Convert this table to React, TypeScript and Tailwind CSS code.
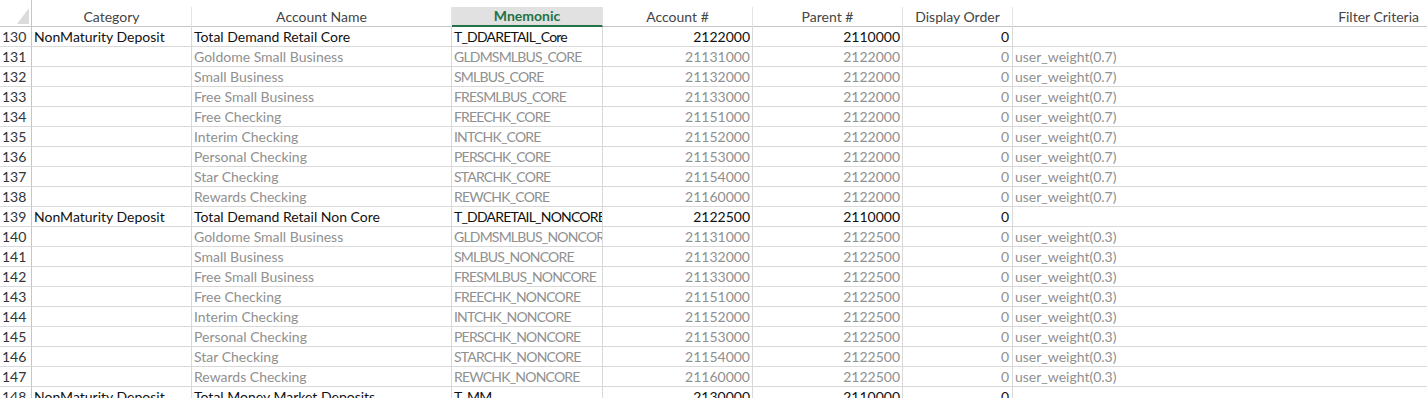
import React from "react";

type Row = {
  n: number;
  cat: string;
  name: string;
  mn: string;
  acct: string;
  parent: string;
  order: string;
  filter: string;
  total: boolean;
};

const subs = [
  ["Goldome Small Business", "GLDMSMLBUS", "21131000"],
  ["Small Business", "SMLBUS", "21132000"],
  ["Free Small Business", "FRESMLBUS", "21133000"],
  ["Free Checking", "FREECHK", "21151000"],
  ["Interim Checking", "INTCHK", "21152000"],
  ["Personal Checking", "PERSCHK", "21153000"],
  ["Star Checking", "STARCHK", "21154000"],
  ["Rewards Checking", "REWCHK", "21160000"],
];

const rows: Row[] = [];
rows.push({ n: 130, cat: "NonMaturity Deposit", name: "Total Demand Retail Core", mn: "T_DDARETAIL_Core", acct: "2122000", parent: "2110000", order: "0", filter: "", total: true });
subs.forEach((s, i) =>
  rows.push({ n: 131 + i, cat: "", name: s[0], mn: s[1] + "_CORE", acct: s[2], parent: "2122000", order: "0", filter: "user_weight(0.7)", total: false })
);
rows.push({ n: 139, cat: "NonMaturity Deposit", name: "Total Demand Retail Non Core", mn: "T_DDARETAIL_NONCORE", acct: "2122500", parent: "2110000", order: "0", filter: "", total: true });
subs.forEach((s, i) =>
  rows.push({ n: 140 + i, cat: "", name: s[0], mn: s[1] + "_NONCORE", acct: s[2], parent: "2122500", order: "0", filter: "user_weight(0.3)", total: false })
);
rows.push({ n: 148, cat: "NonMaturity Deposit", name: "Total Money Market Deposits", mn: "T_MM", acct: "2130000", parent: "2110000", order: "0", filter: "", total: true });

const cols = "grid-cols-[32px_160px_260px_151px_150px_150px_110px_1fr]";

export default function App() {
  return (
    <div
      className="w-[1427px] h-[398px] overflow-hidden bg-white text-[14px]"
      style={{ fontFamily: "Lato, 'Liberation Sans', sans-serif" }}
    >
      {/* header */}
      <div className={`grid ${cols} h-[27px] border-b border-[#c6c6c6]`}>
        <div className="relative border-r border-[#c6c6c6]">
          <div
            className="absolute left-[17px] top-[8px] w-[12px] h-[16px] bg-[#dcdcdc]"
            style={{ clipPath: "polygon(100% 0, 100% 100%, 0 100%)" }}
          />
        </div>
        {["Category", "Account Name"].map((h) => (
          <div key={h} className="mt-[7px] border-r border-[#e3e3e3] flex items-center justify-center text-[#444] leading-[18px]">
            {h}
          </div>
        ))}
        <div className="mt-[7px] border-r border-[#e3e3e3] bg-[#e1e1e1] border-b-2 border-b-[#217346] flex items-center justify-center text-[#217346] font-bold leading-[18px]">
          Mnemonic
        </div>
        {["Account #", "Parent #", "Display Order"].map((h) => (
          <div key={h} className="mt-[7px] border-r border-[#e3e3e3] flex items-center justify-center text-[#444] leading-[18px]">
            {h}
          </div>
        ))}
        <div className="mt-[7px] flex items-center justify-end pr-[8px] text-[#444] leading-[18px]">Filter Criteria</div>
      </div>
      {rows.map((r) => {
        const c = r.total ? "text-[#111]" : "text-[#909090]";
        const cell = "h-[20px] border-b border-r border-[#d9d9d9] leading-[19px] whitespace-nowrap overflow-hidden";
        return (
          <div key={r.n} className={`grid ${cols}`}>
            <div className="h-[20px] border-b border-[#d9d9d9] border-r border-r-[#c6c6c6] leading-[19px] pl-[2px] text-[#333]">
              {r.n}
            </div>
            <div className={`${cell} ${c} pl-[2px]`}>{r.cat}</div>
            <div className={`${cell} ${c} pl-[2px]`}>{r.name}</div>
            <div className={`${cell} ${c} pl-[2px] tracking-[-0.8px]`}>{r.mn}</div>
            <div className={`${cell} ${c} pr-[2px] text-right`}>{r.acct}</div>
            <div className={`${cell} ${c} pr-[2px] text-right`}>{r.parent}</div>
            <div className={`${cell} ${c} pr-[3px] text-right`}>{r.order}</div>
            <div className={`${cell} ${c} pl-[2px] border-r-0`}>{r.filter}</div>
          </div>
        );
      })}
    </div>
  );
}
